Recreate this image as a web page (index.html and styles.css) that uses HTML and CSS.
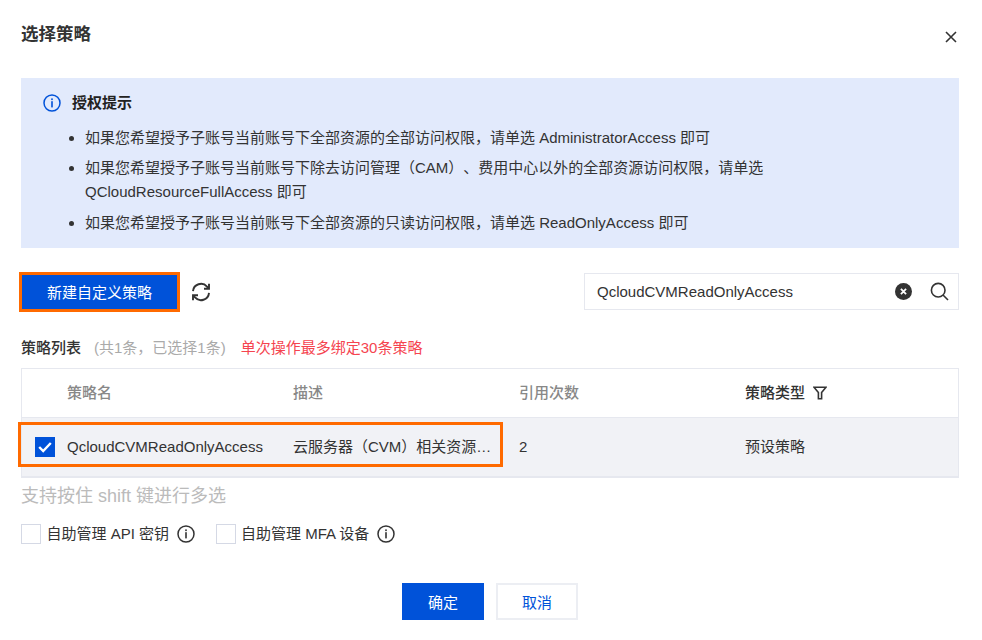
FILE: index.html
```html
<!DOCTYPE html>
<html lang="zh-CN">
<head>
    <meta charset="UTF-8">
    <meta name="viewport" content="width=device-width, initial-scale=1.0">
    <title>选择策略</title>
    <link rel="stylesheet" href="styles.css">
</head>
<body>

<div class="dialog">
    <div class="dialog-head">
        <h2>选择策略</h2>
        <svg class="close-icon" width="12" height="12" viewBox="0 0 12 12"><path d="M1 1l10 10M11 1L1 11" stroke="#333" stroke-width="1.6" fill="none"/></svg>
    </div>

    <div class="notice">
        <div class="notice-title">
            <svg width="18" height="18" viewBox="0 0 18 18"><circle cx="9" cy="9" r="8" fill="none" stroke="#0052d9" stroke-width="1.5"/><rect x="8.2" y="4.4" width="1.6" height="1.7" fill="#0052d9"/><rect x="8.2" y="7.2" width="1.6" height="6.2" fill="#0052d9"/></svg>
            <strong>授权提示</strong>
        </div>
        <ul>
            <li>如果您希望授予子账号当前账号下全部资源的全部访问权限，请单选 AdministratorAccess 即可</li>
            <li>如果您希望授予子账号当前账号下除去访问管理（CAM）、费用中心以外的全部资源访问权限，请单选 QCloudResourceFullAccess 即可</li>
            <li>如果您希望授予子账号当前账号下全部资源的只读访问权限，请单选 ReadOnlyAccess 即可</li>
        </ul>
    </div>

    <div class="toolbar">
        <button class="btn btn-primary btn-create">新建自定义策略</button>
        <svg class="refresh-icon" width="20" height="20" viewBox="0 0 20 20" fill="none" stroke="#333" stroke-width="1.9"><path d="M2 9.2A8 8 0 0 1 16 4.6l1.4 1.7"/><path d="M18 10.8A8 8 0 0 1 4 15.4l-1.4-1.7"/><path d="M18 1.8v5h-5"/><path d="M2 18.2v-5h5"/></svg>
        <div class="search">
            <span class="search-value">QcloudCVMReadOnlyAccess</span>
            <svg width="17" height="17" viewBox="0 0 17 17"><circle cx="8.5" cy="8.5" r="8.5" fill="#333"/><path d="M5.9 5.9l5.2 5.2M11.1 5.9l-5.2 5.2" stroke="#fff" stroke-width="1.8"/></svg>
            <svg class="search-icon" width="19" height="19" viewBox="0 0 19 19" fill="none" stroke="#333" stroke-width="1.6"><circle cx="8.2" cy="8.2" r="6.8"/><path d="M13 13l5 5"/></svg>
        </div>
    </div>

    <div class="list-label">
        <strong>策略列表</strong>
        <span class="count">(共1条，已选择1条)</span>
        <span class="limit">单次操作最多绑定30条策略</span>
    </div>

    <div class="table-wrap">
        <div class="table">
            <div class="row row-head">
                <div></div>
                <div class="cell">策略名</div>
                <div class="cell">描述</div>
                <div class="cell">引用次数</div>
                <div class="cell cell-filter">策略类型
                    <svg width="14" height="14" viewBox="0 0 14 14" fill="none" stroke="#333" stroke-width="1.6"><path d="M1 1.2h12L8.6 6.6v6.2H5.4V6.6z"/></svg>
                </div>
            </div>
            <div class="row row-body">
                <div class="check-cell">
                    <span class="checkbox checked"><svg width="14" height="12" viewBox="0 0 14 12" fill="none" stroke="#fff" stroke-width="2.4"><path d="M1.2 6l4 4L12.8 2"/></svg></span>
                </div>
                <div class="cell">QcloudCVMReadOnlyAccess</div>
                <div class="cell cell-desc">云服务器（CVM）相关资源…</div>
                <div class="cell">2</div>
                <div class="cell">预设策略</div>
            </div>
        </div>
        <div class="row-mark"></div>
    </div>

    <p class="hint">支持按住 shift 键进行多选</p>

    <div class="options">
        <label class="option">
            <span class="checkbox"></span>
            自助管理 API 密钥
            <svg width="18" height="18" viewBox="0 0 18 18"><circle cx="9" cy="9" r="8" fill="none" stroke="#333" stroke-width="1.5"/><rect x="8.2" y="4.4" width="1.6" height="1.7" fill="#333"/><rect x="8.2" y="7.2" width="1.6" height="6.2" fill="#333"/></svg>
        </label>
        <label class="option">
            <span class="checkbox"></span>
            自助管理 MFA 设备
            <svg width="18" height="18" viewBox="0 0 18 18"><circle cx="9" cy="9" r="8" fill="none" stroke="#333" stroke-width="1.5"/><rect x="8.2" y="4.4" width="1.6" height="1.7" fill="#333"/><rect x="8.2" y="7.2" width="1.6" height="6.2" fill="#333"/></svg>
        </label>
    </div>

    <div class="dialog-foot">
        <button class="btn btn-primary">确定</button>
        <button class="btn btn-plain">取消</button>
    </div>
</div>

</body>
</html>
```

FILE: styles.css
```css
body {
    margin: 0;
    background-color: #fff;
    font-family: "Liberation Sans", "Noto Sans CJK SC", sans-serif;
    font-size: 15px;
    color: #333;
    text-spacing-trim: space-all;
}
.dialog {
    padding: 0 23px 20px 21px;
}
.dialog-head {
    display: flex;
    justify-content: space-between;
    height: 78px;
}
.dialog-head h2 {
    margin: 22px 0 0;
    font-size: 17.5px;
    line-height: 24px;
    font-weight: bold;
    color: #333;
}
.close-icon {
    margin: 31px 2px 0 0;
}
.notice {
    background-color: #e2eafc;
    padding: 13px 22px 13px;
    line-height: 24px;
}
.notice-title {
    display: flex;
    align-items: center;
    gap: 11px;
    margin-bottom: 11px;
}
.notice-title strong {
    color: #222;
}
.notice ul {
    margin: 0;
    padding: 0 0 0 42px;
}
.notice li {
    margin-bottom: 6px;
}
.notice li:nth-child(2) {
    margin-bottom: 7px;
}
.notice li:last-child {
    margin-bottom: 0;
}
.toolbar {
    display: flex;
    align-items: center;
    margin-top: 25px;
}
.btn {
    width: 82px;
    height: 37px;
    border: none;
    font-family: inherit;
    font-size: 15px;
    cursor: pointer;
}
.btn-primary {
    background-color: #0052d9;
    color: #fff;
}
.btn-plain {
    background-color: #fff;
    border: 2px solid #eceef3;
    color: #0052d9;
}
.btn-create {
    width: 155px;
    height: 34px;
    margin-left: 1px;
    outline: 3px solid #ff6a00;
}
.refresh-icon {
    margin-left: 14px;
}
.search {
    display: flex;
    align-items: center;
    box-sizing: border-box;
    width: 375px;
    height: 37px;
    margin-left: auto;
    padding: 0 9px 0 12px;
    border: 1px solid #e6e8ef;
}
.search-value {
    flex: 1;
}
.search-icon {
    margin-left: 18px;
}
.list-label {
    display: flex;
    margin-top: 26px;
    line-height: 24px;
}
.list-label strong {
    font-weight: 500;
}
.count {
    margin-left: 13px;
    color: #aaa;
}
.limit {
    margin-left: 15px;
    color: #f5444f;
}
.table-wrap {
    position: relative;
    margin-top: 8px;
}
.table {
    border: 1px solid #e6e8ef;
    border-bottom-width: 2px;
}
.row {
    display: grid;
    grid-template-columns: 45px 226px 226px 226px 1fr;
    align-items: center;
}
.row-head {
    height: 48px;
    border-bottom: 1px solid #e6e8ef;
    color: #888;
    font-weight: 500;
}
.row-body {
    height: 58px;
    background-color: #f1f2f6;
}
.cell {
    padding-right: 12px;
    padding-bottom: 1px;
    line-height: 20px;
}
.cell-desc {
    padding-right: 0;
    white-space: nowrap;
}
.cell-filter {
    display: flex;
    align-items: center;
    gap: 8px;
    color: #333;
}
.check-cell {
    padding-left: 13px;
    padding-bottom: 1px;
}
.checkbox {
    display: flex;
    align-items: center;
    justify-content: center;
    box-sizing: border-box;
    width: 20px;
    height: 20px;
    border: 1px solid #d5d9e5;
    background-color: #fff;
}
.checkbox.checked {
    background-color: #0052d9;
    border-color: #0052d9;
}
.row-mark {
    position: absolute;
    left: -3px;
    top: 54px;
    box-sizing: border-box;
    width: 485px;
    height: 45px;
    border: 3px solid #ff6a00;
}
.hint {
    margin: 6px 0 0;
    font-size: 18px;
    line-height: 24px;
    color: #bbb;
}
.options {
    display: flex;
    gap: 21px;
    margin-top: 16px;
}
.option {
    display: flex;
    align-items: center;
    gap: 5.5px;
    height: 20px;
    line-height: 18px;
}
.option svg {
    margin-left: 2px;
}
.dialog-foot {
    display: flex;
    justify-content: center;
    gap: 12px;
    margin-top: 39px;
}
```
